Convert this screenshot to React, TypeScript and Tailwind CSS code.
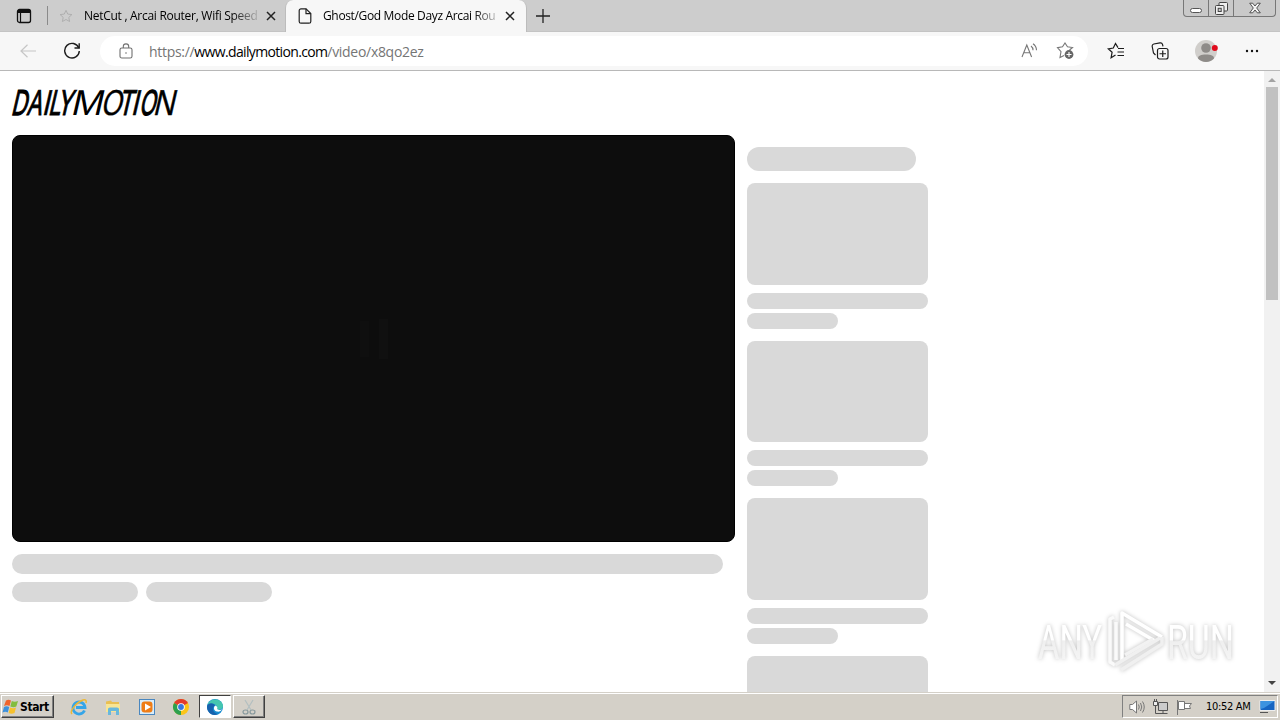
import type { ReactNode } from 'react'

const suggestions = [
  { id: 1, thumb: 'h-[102px]' },
  { id: 2, thumb: 'h-[101px]' },
  { id: 3, thumb: 'h-[102px]' },
  { id: 4, thumb: 'h-[102px]' },
]

// baseline x, width, stroke and glyph of each letter, before the slant
const logoLetters = [
  { char: 'D', x: -1.3, w: 15.5, stroke: 1.3 },
  { char: 'A', x: 14.5, w: 14.5, stroke: 1.1 },
  { char: 'I', x: 29.5, w: 7.5, stroke: 0.6 },
  { char: 'L', x: 36, w: 12, stroke: 1.1 },
  { char: 'Y', x: 44.5, w: 15, stroke: 1.1 },
  { char: 'M', x: 58, w: 32, stroke: 0 },
  { char: 'O', x: 88.5, w: 20.5, stroke: 0.4 },
  { char: 'T', x: 106, w: 14, stroke: 1.1 },
  { char: 'I', x: 118.5, w: 7.5, stroke: 0.6 },
  { char: 'O', x: 127, w: 15.5, stroke: 1.3 },
  { char: 'N', x: 140.5, w: 21.5, stroke: 0.4 },
]

function Logo() {
  return (
    <svg width="180" height="48" viewBox="0 0 180 48" className="block overflow-visible">
      <g transform="translate(0 36) skewX(-13)" fontFamily="Liberation Sans, sans-serif" fontSize="36" stroke="#000">
        {logoLetters.map((l) => (
          <text
            key={l.x}
            x={l.x}
            y="0"
            textLength={l.w}
            lengthAdjust="spacingAndGlyphs"
            strokeWidth={l.stroke}
            fontWeight="400"
          >
            {l.char}
          </text>
        ))}
      </g>
    </svg>
  )
}

function Close() {
  return (
    <svg width="10" height="10" viewBox="0 0 10 10" className="shrink-0">
      <path d="M1 1l8 8M9 1L1 9" stroke="#222" strokeWidth="1.5" />
    </svg>
  )
}

function TabStrip() {
  return (
    <header className="relative flex h-8 shrink-0 border-b border-[#c4c4c4] bg-[#cdcdcd] font-['Open_Sans',sans-serif] text-[12px] text-black">
      <div className="flex w-[47px] items-center justify-center">
        <svg width="16" height="16" viewBox="0 0 16 16" fill="none" stroke="#111">
          <rect x="1.5" y="1.5" width="13" height="13" rx="2" strokeWidth="1.3" />
          <path d="M2 3.5h12" strokeWidth="3" />
          <path d="M4.5 4v10" strokeWidth="1.2" />
        </svg>
      </div>
      <div className="my-[6px] w-px bg-[#8a8a8a]" />
      <div className="flex w-[237px] items-center pl-[11px]">
        <svg width="14" height="14" viewBox="0 0 16 16" fill="none" stroke="#aaa" className="shrink-0">
          <path d="M8 1.5l2 4.3 4.7.6-3.5 3.2.9 4.7L8 12l-4.1 2.3.9-4.7L1.3 6.4 6 5.8z" />
        </svg>
        <span className="ml-[11px] w-[176px] overflow-hidden whitespace-nowrap tracking-[-0.28px] [mask-image:linear-gradient(to_right,#000_148px,transparent_178px)]">
          NetCut , Arcai Router, Wifi Speed
        </span>
        <div className="ml-[6px]">
          <Close />
        </div>
      </div>
      <div className="relative z-10 -mb-px flex w-[242px] items-center rounded-t-lg border-x border-[#bcbcbc] bg-[#f7f7f7] pl-3">
        <svg width="14" height="16" viewBox="0 0 14 16" fill="none" stroke="#222" strokeWidth="1.2" className="shrink-0">
          <path d="M8 .8H3A1.8 1.8 0 0 0 1.2 2.6v10.8A1.8 1.8 0 0 0 3 15.2h8a1.8 1.8 0 0 0 1.8-1.8V5.6z" />
          <path d="M8 .8v4.8h4.8" />
        </svg>
        <span className="ml-[11px] w-[175px] overflow-hidden whitespace-nowrap tracking-[-0.35px] [mask-image:linear-gradient(to_right,#000_150px,transparent_180px)]">
          Ghost/God Mode Dayz Arcai Rou
        </span>
        <div className="ml-[7px]">
          <Close />
        </div>
      </div>
      <svg width="14" height="14" viewBox="0 0 14 14" className="mt-[9px] ml-[9px]">
        <path d="M7 0v14M0 7h14" stroke="#222" strokeWidth="1.3" />
      </svg>
      <WindowButtons />
    </header>
  )
}

function WindowButtons() {
  return (
    <div className="mr-[4px] ml-auto flex h-[17px] rounded-b border border-t-0 border-[#777] bg-[#c9c9c9]">
      <div className="flex w-[25px] items-end justify-center border-r border-[#777] pb-[3px]">
        <div className="h-[5px] w-3 rounded-sm border border-[#555] bg-white" />
      </div>
      <div className="flex w-[25px] items-center justify-center border-r border-[#777]">
        <svg width="13" height="13" viewBox="0 0 13 13" fill="#eee" stroke="#444">
          <rect x="4" y=".5" width="8.5" height="8.5" rx="1" />
          <rect x=".5" y="3.5" width="8.5" height="9" rx="1" />
          <rect x="3.2" y="6.3" width="3" height="3.2" fill="#ccc" />
        </svg>
      </div>
      <div className="flex w-[41px] items-center justify-center">
        <svg width="12" height="12" viewBox="0 0 12 12" fill="#f4f4f4" stroke="#444" strokeWidth=".9">
          <path d="M.7 1.2h3L6 4l2.3-2.8h3L7.7 6l3.6 4.8h-3L6 8l-2.3 2.8h-3L4.3 6z" />
        </svg>
      </div>
    </div>
  )
}

function Toolbar() {
  return (
    <div className="flex h-[39px] shrink-0 items-center border-b border-[#b8b8b8] bg-[#f7f7f7]">
      <svg width="16" height="14" viewBox="0 0 16 14" fill="none" stroke="#c6c6c6" strokeWidth="1.2" className="ml-[20px]">
        <path d="M16 7H1M7.5.8L1 7l6.5 6.2" />
      </svg>
      <svg width="18" height="18" viewBox="0 0 18 18" fill="none" stroke="#1c1c1c" strokeWidth="1.4" className="ml-[27px]">
        <path d="M15.8 6A7.3 7.3 0 1 0 16.3 9" />
        <path d="M16.2 1.3V6h-4.7" />
      </svg>
      <div className="ml-[19px] flex h-[30px] w-[988px] items-center rounded-full bg-white pl-[19px]">
        <svg width="14" height="16" viewBox="0 0 14 16" fill="none" stroke="#707070" strokeWidth="1.1">
          <rect x="1" y="5" width="12" height="10" rx="1.8" />
          <path d="M4.3 5V3.6a2.7 2.7 0 0 1 5.4 0V5" />
          <circle cx="7" cy="10" r=".8" fill="#707070" stroke="none" />
        </svg>
        <span className="ml-[16px] whitespace-nowrap font-['Open_Sans',sans-serif] text-[14px] tracking-[-0.3px] text-[#757575]">
          https://<span className="tracking-[-0.65px] text-black">www.dailymotion.com</span>/video/x8qo2ez
        </span>
        <div className="mr-[14px] ml-auto flex items-center gap-[18px]">
          <svg width="17" height="16" viewBox="0 0 17 16" fill="none" stroke="#777" strokeWidth="1.1">
            <path d="M1 14L5.8 2l4.800 12M2.700 9.700h6.200M10 3a5 5 0 0 1 2 4.200M12 .8a8 8 0 0 1 3.500 6.400" />
          </svg>
          <svg width="18" height="18" viewBox="0 0 18 18" fill="none" stroke="#777" strokeWidth="1.1">
            <path d="M13.5 8l3-2.5-5-.7L9 1 6.5 4.8l-5 .8L5 9.600 4 15.500l4-2" />
            <circle cx="13" cy="12.5" r="4.4" fill="#666" stroke="none" />
            <path d="M13 10v5M10.5 12.5h5" stroke="#fff" />
          </svg>
        </div>
      </div>
      <svg width="18" height="18" viewBox="0 0 18 18" fill="none" stroke="#1c1c1c" strokeWidth="1.2" className="ml-[19px]">
        <path d="M11 5.6L8.5 1.5 6.3 6l-5 .8 3.8 3.4-1 5.600L8.500 13M11 6.500h6M10.500 10H17M10.500 13.500H17" />
      </svg>
      <svg width="18" height="18" viewBox="0 0 18 18" fill="none" stroke="#1c1c1c" strokeWidth="1.2" className="ml-[26px]">
        <rect x="6.5" y="6.5" width="10.5" height="10.5" rx="2" />
        <path d="M11.750 8.500v6.500M8.500 11.750H15M4.500 13L2.500 11 1.200 4.500A2.200 2.200 0 0 1 2.800 2L9 .9a2.200 2.200 0 0 1 2.500 1.500l.5 2" />
      </svg>
      <svg width="24" height="24" viewBox="0 0 24 24" className="ml-[25px]">
        <circle cx="12" cy="12" r="11" fill="#d0cecb" />
        <circle cx="12" cy="9" r="4.8" fill="#8e8b88" />
        <path d="M4 19.500C4 16.500 7 15.500 12 15.500s8 1 8 4a11 11 0 0 1-16 0" fill="#8e8b88" />
        <circle cx="20.800" cy="9" r="3" fill="#e00b1c" />
      </svg>
      <svg width="14" height="4" viewBox="0 0 14 4" fill="#111" className="ml-[27px]">
        <circle cx="2" cy="2" r="1.2" />
        <circle cx="7" cy="2" r="1.2" />
        <circle cx="12" cy="2" r="1.2" />
      </svg>
    </div>
  )
}

function Player() {
  return (
    <div className="flex h-[407px] w-[723px] items-center justify-center gap-[10px] overflow-hidden rounded-lg border border-black bg-[#0d0d0d]">
      <div className="h-9 w-[9px] bg-[#0f0f0f]" />
      <div className="h-10 w-[9px] bg-[#101010]" />
    </div>
  )
}

function Scrollbar() {
  return (
    <div className="flex w-4 shrink-0 flex-col items-center bg-[#f1f1f1]">
      <div className="flex h-4 items-center">
        <svg width="8" height="4" viewBox="0 0 8 4" fill="#a3a3a3" className="mt-[2px]">
          <path d="M4 0l4 4H0z" />
        </svg>
      </div>
      <div className="h-[213px] w-3 bg-[#c1c1c1]" />
      <svg width="8" height="4" viewBox="0 0 8 4" fill="#444" className="mt-auto mb-[7px]">
        <path d="M0 0h8L4 4z" />
      </svg>
    </div>
  )
}

function Watermark() {
  return (
    <svg
      width="210"
      height="76"
      viewBox="0 0 210 76"
      className="absolute top-[532px] left-[1030px] drop-shadow-[0_0_2px_rgba(0,0,0,0.25)]"
    >
      <defs>
        <linearGradient id="fade" x1="0" y1="16" x2="0" y2="58" gradientUnits="userSpaceOnUse">
          <stop offset="0.5" stopColor="#fff" />
          <stop offset="0.52" stopColor="#efefef" />
          <stop offset="1" stopColor="#f5f5f5" />
        </linearGradient>
      </defs>
      <g fontFamily="Roboto, sans-serif" fontSize="49" fontWeight="400" fill="url(#fade)">
        <text x="8" y="56" textLength="64" lengthAdjust="spacingAndGlyphs">ANY</text>
        <text x="137" y="56" textLength="67" lengthAdjust="spacingAndGlyphs">RUN</text>
      </g>
      <g fill="none" strokeWidth="3.5" strokeLinejoin="round">
        <path d="M84 14l-4 2v43l5 3M86 19v38" stroke="#fafafa" />
        <path d="M92 57V10l40 24" stroke="#fff" />
        <path d="M96 21l29 17" stroke="#fff" />
        <path d="M95 52l28-16" stroke="#f2f2f2" />
        <path d="M85 62l45-27M91 67l41-26v-7" stroke="#f0f0f0" />
      </g>
    </svg>
  )
}

function Page() {
  return (
    <div className="relative flex h-[621px] shrink-0 overflow-hidden bg-white">
      <main className="flex-1 overflow-hidden pl-3">
        <div className="h-16 pt-2">
          <Logo />
        </div>
        <div className="flex gap-3">
          <div className="w-[723px]">
            <Player />
            <div className="mt-3 h-5 w-[711px] rounded-full bg-[#d9d9d9]" />
            <div className="mt-2 flex gap-2">
              <div className="h-5 w-[126px] rounded-full bg-[#d9d9d9]" />
              <div className="h-5 w-[126px] rounded-full bg-[#d9d9d9]" />
            </div>
          </div>
          <aside className="w-[181px] pt-3">
            <div className="mb-3 h-6 w-[169px] rounded-full bg-[#d9d9d9]" />
            {suggestions.map((s) => (
              <div key={s.id} className="mb-3">
                <div className={`${s.thumb} rounded-lg bg-[#d9d9d9]`} />
                <div className="mt-2 h-4 rounded-full bg-[#d9d9d9]" />
                <div className="mt-1 h-4 w-[91px] rounded-full bg-[#d9d9d9]" />
              </div>
            ))}
          </aside>
        </div>
      </main>
      <Scrollbar />
      <Watermark />
    </div>
  )
}

function TaskIcon({ children }: { children: ReactNode }) {
  return (
    <svg width="18" height="18" viewBox="0 0 18 18" className="shrink-0">
      {children}
    </svg>
  )
}

function Taskbar() {
  return (
    <footer className="flex h-7 shrink-0 items-center border-t border-[#d4d0c8] bg-[#d4d0c8] font-['DejaVu_Sans_Condensed','DejaVu_Sans',sans-serif] text-black shadow-[inset_0_1px_0_#fff]">
      <div className="ml-px flex h-[23px] w-[53px] items-center gap-px border border-t-white border-r-[#404040] border-b-[#404040] border-l-white shadow-[inset_-1px_-1px_0_#808080]">
        <svg width="17" height="17" viewBox="0 0 17 17" className="shrink-0">
          <path d="M4 2.500Q6.500 1 9 2.500L7.500 8Q5 6.500 2 8z" fill="#f0642c" />
          <path d="M9.800 3Q12.500 4.500 16 3L14.300 8.500Q11.500 10 8.300 8.400z" fill="#83bd3d" />
          <path d="M2 9Q4.500 7.500 7.200 9L5.800 14.500Q3.500 13 .5 14.500z" fill="#3d91dc" />
          <path d="M8 9.400Q11 11 14 9.500l-1.500 5.500Q9.500 16.500 6.600 15z" fill="#f7c12d" />
        </svg>
        <span className="text-[12px] font-bold tracking-[-0.4px]">Start</span>
      </div>
      <div className="ml-[16px] flex items-center gap-[16px]">
        {/* Internet Explorer */}
        <TaskIcon>
          <path d="M14.500 12.500A6 6 0 1 1 15 9.500H6" fill="none" stroke="#35a5e8" strokeWidth="2.800" />
          <path d="M2 16C-1 13 7 4 13 2q4-1 3 3" fill="none" stroke="#edb835" strokeWidth="1.5" />
        </TaskIcon>
        {/* Explorer */}
        <TaskIcon>
          <path d="M2 3.500l5-1 1 1.500h7v10H2z" fill="#e9bf52" />
          <path d="M2 6h14v8H2z" fill="#f8e594" />
          <path d="M4 17v-6q0-1.500 2-1.500h7q2 0 2 1.500v6h-3v-4H7v4z" fill="#68b8dc" />
        </TaskIcon>
        {/* Media Player */}
        <TaskIcon>
          <rect x="1.5" y="1.5" width="15" height="15" fill="#d9edfa" stroke="#4a87bf" />
          <rect x="3.500" y="3.500" width="11" height="11" rx="3" fill="#ef7d16" />
          <path d="M7 5.500v7l6-3.500z" fill="#fff" />
        </TaskIcon>
        {/* Chrome */}
        <TaskIcon>
          <circle cx="9" cy="9" r="8" fill="#fbc518" />
          <path d="M9 9L2.070 5a8 8 0 0 1 13.860 0z" fill="#e33b2e" />
          <path d="M9 9v8A8 8 0 0 1 2.070 5z" fill="#2da04f" />
          <circle cx="9" cy="9" r="3.8" fill="#fff" />
          <circle cx="9" cy="9" r="2.9" fill="#3878e0" />
        </TaskIcon>
      </div>
      <div className="ml-[9px] flex h-[23px] w-8 items-center justify-center border border-t-[#404040] border-r-white border-b-white border-l-[#404040] bg-white">
        <TaskIcon>
          <circle cx="9" cy="9" r="8" fill="#168bcf" />
          <path d="M1.500 7C3 0 15-1 17 7.500c.5 4-4 5-6.500 3.500 2-4-4-7-9-4z" fill="#45c6b0" />
          <path d="M11 11c2 1.500 4 1 5.500 0-1.500 2-3.500 3-5.500 2.500-3-.5-4-3.500-2-6 2 .5 3 2 2 3.500z" fill="#fff" />
          <path d="M1 9c0-4 6-5 8-1.500-4 2-2 8 3 8.500C6 19 1 14 1 9z" fill="#1762ad" />
        </TaskIcon>
      </div>
      <div className="ml-[2px] flex h-[23px] w-8 items-center justify-center border border-t-white border-r-[#404040] border-b-[#404040] border-l-white shadow-[inset_-1px_-1px_0_#808080]">
        <svg width="16" height="18" viewBox="0 0 16 18" fill="none" stroke="#b3bfc1" strokeWidth="1.2">
          <path d="M4 2l6 10M12 2L6 12" />
          <ellipse cx="4.5" cy="14" rx="2.5" ry="2" stroke="#87999d" />
          <ellipse cx="11.5" cy="14" rx="2.5" ry="2" stroke="#87999d" />
        </svg>
      </div>
      <div className="mr-[2px] ml-auto flex h-[23px] w-[156px] items-center border border-t-[#808080] border-r-white border-b-white border-l-[#808080]">
        <svg width="16" height="16" viewBox="0 0 16 16" fill="#fff" stroke="#777" className="ml-[6px] shrink-0">
          <path d="M.8 5.500h2.700L7.500 2v12l-4-3.500H.8z" />
          <path d="M9.500 5.500q1.500 2.500 0 5M11.500 4q2.500 4 0 8M13.500 2.500q3.500 5.500 0 11" fill="none" />
        </svg>
        <svg width="17" height="16" viewBox="0 0 17 16" fill="#eee" stroke="#555" className="ml-[7px] shrink-0">
          <path d="M6.500 3.500h9v8h-9z" fill="#ccc" />
          <path d="M1.500 2.500h4v4h-4zM2.500 0v2.500M4.500 0v2.500" />
          <path d="M3.500 6.500v8h12M11 11.500v3" fill="none" />
        </svg>
        <svg width="17" height="16" viewBox="0 0 17 16" fill="#fff" stroke="#777" className="ml-[7px] shrink-0">
          <path d="M1.500 1v15M2.500 2.500h6v8h-6zM8.500 4.500h7l-2 2.500 1 2.500h-6" />
        </svg>
        <span className="ml-[13px] pt-[2px] text-[11px] tracking-[-0.3px] whitespace-nowrap">10:52 AM</span>
        <svg width="17" height="15" viewBox="0 0 17 15" className="mr-[1px] ml-auto shrink-0">
          <path d="M1 1.500h15v10H1z" fill="#1765c2" stroke="#eee" />
          <path d="M1.500 2h14L5 9l-3.500 1z" fill="#3d93e0" />
          <path d="M1 13.500h8" stroke="#555" />
        </svg>
      </div>
    </footer>
  )
}

export default function App() {
  return (
    <div className="flex h-[720px] w-[1280px] flex-col overflow-hidden bg-white">
      <TabStrip />
      <Toolbar />
      <Page />
      <Taskbar />
    </div>
  )
}
